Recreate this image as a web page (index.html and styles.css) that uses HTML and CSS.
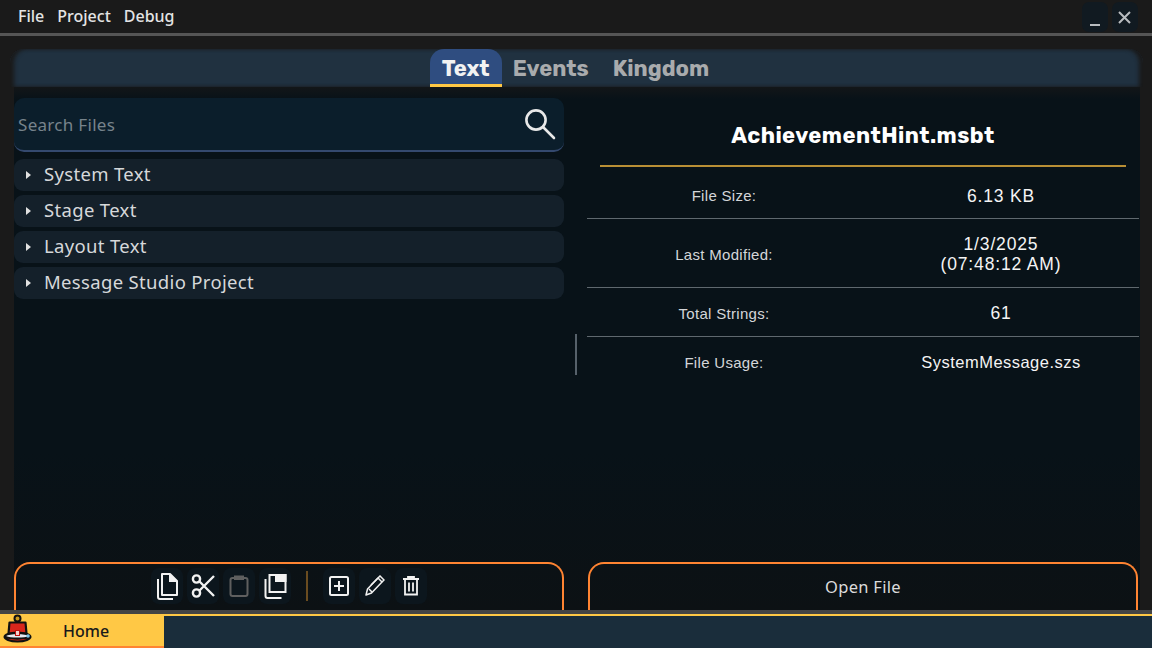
FILE: index.html
```html
<!DOCTYPE html>
<html lang="en">
<head>
<meta charset="utf-8">
<title>Editor</title>
<link rel="stylesheet" href="styles.css">
</head>
<body>
<header class="menubar">
  <nav class="menu"><span>File</span><span>Project</span><span>Debug</span></nav>
  <div class="winbtns">
    <button class="winbtn"><svg width="26" height="30" viewBox="0 0 26 30"><path d="M8 23h10" stroke="#b9bcbf" stroke-width="2"/></svg></button>
    <button class="winbtn"><svg width="26" height="30" viewBox="0 0 26 30"><path d="M7 10l11 11M18 10L7 21" stroke="#b9bcbf" stroke-width="2"/></svg></button>
  </div>
</header>
<main class="workspace">
  <div class="tabs">
    <span class="tab active">Text</span><span class="tab">Events</span><span class="tab">Kingdom</span>
  </div>
  <div class="panel">
    <section class="col">
      <div class="search">
        <span class="placeholder">Search Files</span>
        <svg width="32" height="32" viewBox="0 0 32 32" fill="none" stroke="#e8e8e8" stroke-width="2.6"><circle cx="12" cy="12" r="9.600"/><path d="M19 19l11 11" stroke-linecap="round"/></svg>
      </div>
      <ul class="tree">
        <li><i class="caret"></i>System Text</li>
        <li><i class="caret"></i>Stage Text</li>
        <li><i class="caret"></i>Layout Text</li>
        <li><i class="caret"></i>Message Studio Project</li>
      </ul>
      <div class="footer toolbar">
        <button class="tool"><svg width="24" height="28" viewBox="0 0 24 28" fill="none" stroke="#f2f2f2" stroke-width="2"><path d="M7 2h8l7 7v14H7z" stroke-linejoin="round"/><path d="M15 2v7h7" fill="#f2f2f2"/><path d="M3 7v18c0 1 .5 2 2 2h13"/></svg></button>
        <button class="tool"><svg width="24" height="26" viewBox="0 0 24 26" fill="none" stroke="#f2f2f2" stroke-width="2.400"><circle cx="5.500" cy="6" r="3.600"/><circle cx="5.500" cy="20" r="3.600"/><path d="M8.500 8.500L23 23M8.500 17.500L23 3"/></svg></button>
        <button class="tool"><svg width="20" height="24" viewBox="0 0 20 24" fill="none" stroke="#5f5f5f" stroke-width="2"><rect x="1.500" y="4" width="17" height="18" rx="2"/><path d="M6 5V2.500h8V5z" fill="#5f5f5f"/></svg></button>
        <button class="tool"><svg width="24" height="28" viewBox="0 0 24 28" fill="none" stroke="#f2f2f2" stroke-width="2"><rect x="6.500" y="3" width="16" height="17"/><path d="M13 3h9.500v6H13z" fill="#f2f2f2"/><path d="M2.500 7v17c0 1 .5 2 2 2h14"/></svg></button>
        <span class="sep"></span>
        <button class="tool"><svg width="20" height="20" viewBox="0 0 20 20" fill="none" stroke="#f2f2f2" stroke-width="2"><rect x="1" y="1" width="18" height="18" rx="1.500"/><path d="M10 5v10M5 10h10"/></svg></button>
        <button class="tool"><svg width="20" height="22" viewBox="0 0 20 22" fill="none" stroke="#f2f2f2" stroke-width="1.500"><path d="M1 20l1.500-6L13 3l4 4L6.500 18z" stroke-linejoin="round"/><path d="M13 3l2-2 4 4-2 2M4 14l3 3M15 1l-9 9"/></svg></button>
        <button class="tool"><svg width="18" height="20" viewBox="0 0 18 20" fill="none" stroke="#f2f2f2" stroke-width="1.800"><path d="M1 3h16M6 3V1h6v2M3 3v15.500h12V3M7 6.500v9M11 6.500v9"/></svg></button>
      </div>
    </section>
    <div class="gutter"><span class="grip"></span></div>
    <section class="col">
      <div class="info">
        <h1 class="filename">AchievementHint.msbt</h1>
        <div class="rule"></div>
        <dl class="props">
          <div class="row r1"><dt>File Size:</dt><dd>6.13 KB</dd></div>
          <div class="row r2"><dt>Last Modified:</dt><dd>1/3/2025<br>(07:48:12 AM)</dd></div>
          <div class="row r3"><dt>Total Strings:</dt><dd>61</dd></div>
          <div class="row r4"><dt>File Usage:</dt><dd class="usage">SystemMessage.szs</dd></div>
        </dl>
      </div>
      <div class="footer open">Open File</div>
    </section>
  </div>
</main>
<footer class="statusbar">
  <div class="home">
    <svg class="logo" width="32" height="32" viewBox="0 0 32 32">
      <circle cx="15.500" cy="5.500" r="3" fill="#c9971f" stroke="#111" stroke-width="2"/>
      <path d="M7.500 9.500h16l1 11h-18z" fill="#d8261c" stroke="#111" stroke-width="2.200" stroke-linejoin="round"/>
      <ellipse cx="15.500" cy="24" rx="14" ry="5.500" fill="#111"/>
      <path d="M4 23c3-2.500 20-2.500 23 0-4 2-19 2-23 0z" fill="#e8e8f0"/>
      <path d="M5 25.500c6 1.500 15 1.500 21 0-5 2.500-16 2.500-21 0z" fill="#d8261c"/>
      <rect x="13.500" y="17.500" width="4" height="5" fill="#f4d0d0" stroke="#b11" stroke-width="1"/>
      <circle cx="26" cy="23" r="1.800" fill="#7cc4e8"/>
    </svg>
    <span class="home-label">Home</span>
  </div>
</footer>
</body>
</html>
```

FILE: styles.css
```css
* { box-sizing: border-box; }
html, body { margin: 0; height: 648px; overflow: hidden; }
body {
  display: flex; flex-direction: column; width: 1152px;
  background: #1a1a1a; color: #eee;
  font-family: "Noto Sans", sans-serif;
}
.menubar {
  height: 36px; flex: none; display: flex; justify-content: space-between;
  border-bottom: 3px solid #555; padding: 2px 14px 1px 18px;
}
.menu { display: flex; gap: 13px; font-size: 16px; font-weight: 500; color: #e4e4e4; line-height: 28px; }
.winbtns { display: flex; gap: 4px; }
.winbtn { width: 26px; height: 30px; padding: 0; border: 0; border-radius: 7px; background: #111a21; display: block; }
.workspace { flex: 1; display: flex; flex-direction: column; padding-top: 13px; min-height: 0; }
.tabs {
  height: 38px; flex: none; margin: 0 9px 0 10px; display: flex; justify-content: center; padding-right: 2px;
  background: #203140; border-radius: 14px 14px 0 0;
  box-shadow: inset 5px 0 4px -1px #1a1a1a, inset -5px 0 4px -1px #1a1a1a;
}
.tab {
  font-family: Rubik, Inter, sans-serif; font-weight: 700; font-size: 22px; line-height: 32px;
  color: #a9abad; padding: 4px 12px 0;
}
.tab.active { background: #2f4d80; color: #f2f2f2; border-radius: 14px 14px 0 0; border-bottom: 3px solid #ffc845; margin-right: -1px; }
.panel {
  flex: 1; min-height: 0; margin: 0 12px 0 14px; padding: 11px 0 0; display: flex; align-items: stretch;
  background: linear-gradient(#131618 0, #081218 12px, #081218 70%, #0c1114 100%);
}
.col { width: 550px; display: flex; flex-direction: column; }
.gutter { width: 24px; display: flex; align-items: center; justify-content: center; }
.grip { width: 2px; height: 41px; background: #56616a; }
.search {
  height: 54px; flex: none; display: flex; align-items: center; justify-content: space-between;
  padding: 0 8px 0 4px; background: #0b1e2b; border-radius: 10px; border-bottom: 2px solid #34496e;
}
.placeholder { font-size: 17px; letter-spacing: .3px; color: #77838b; }
.tree { list-style: none; margin: 7px 0 0; padding: 0; display: flex; flex-direction: column; gap: 4px; }
.tree li {
  height: 32px; background: #14202a; border-radius: 9px; display: flex; align-items: center;
  font-size: 18.500px; letter-spacing: .33px; color: #d6d8da; padding: 0 0 3px 12px; gap: 13px;
}
.caret { width: 0; height: 0; margin-top: 3px; border-left: 5px solid #e0e0e0; border-top: 4px solid transparent; border-bottom: 4px solid transparent; }
.footer {
  margin-top: auto; height: 48px; flex: none; border: 2px solid #ff8432; border-bottom: 0;
  border-radius: 16px 16px 0 0;
}
.toolbar { display: flex; align-items: center; justify-content: center; gap: 4px; padding-bottom: 2px; }
.tool { width: 32px; height: 36px; padding: 0; border: 0; border-radius: 8px; background: #0c161d; display: flex; align-items: center; justify-content: center; }
.sep { width: 2px; height: 30px; background: #6a4c20; margin: 0 11px; }
.open { display: flex; align-items: center; justify-content: center; font-size: 16.500px; letter-spacing: .3px; color: #dcdcdc; padding-bottom: 2px; }
.info { margin: 0 -1px; }
.filename {
  margin: 0 1px; height: 67px; text-align: center; font-family: Rubik, Inter, sans-serif; font-size: 22px; font-weight: 700;
  line-height: 76px; letter-spacing: .45px; color: #fff;
}
.rule { height: 2px; margin: 0 13px; background: #b98f35; }
.props { margin: 0; }
.row { display: grid; grid-template-columns: 1fr 1fr; align-items: center; text-align: center; border-bottom: 1px solid #5f686e; }
.r1 { height: 52px; padding-top: 6px; } .r2 { height: 69px; padding-top: 2px; } .r3 { height: 49px; padding-top: 2px; } .r4 { height: 50px; border-bottom: 0; }
dt { font-family: "Liberation Sans", sans-serif; font-size: 15px; letter-spacing: .3px; color: #d4d6d8; padding-right: 2px; }
dd { margin: 0; font-family: "Liberation Sans", sans-serif; font-size: 17.500px; letter-spacing: .85px; line-height: 20px; color: #f4f4f4; }
dd.usage { font-size: 16.500px; letter-spacing: .47px; }
.statusbar {
  height: 38px; flex: none; background: #1a2d3b; border-top: 4px solid #444;
  box-shadow: inset 0 2px 0 #ffc845;
}
.home {
  width: 164px; height: 34px; background: #ffc845; border-bottom: 2px solid #ff8432;
  display: flex; align-items: center;
}
.logo { margin: -2px 0 0 2px; flex: none; }
.home-label { margin-left: 29px; padding-top: 2px; font-size: 16px; font-weight: 500; color: #1a1a1a; }
```
